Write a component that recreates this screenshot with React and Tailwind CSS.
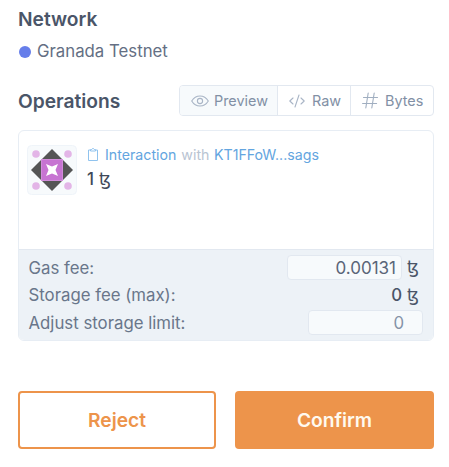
import React from "react";

function Tez({ className = "" }) {
  return (
    <span className={`inline-block w-[11px] whitespace-nowrap font-['DejaVu_Sans',sans-serif] ${className}`}>
      ꜩ
    </span>
  );
}

function EyeIcon() {
  return (
    <svg width="18" height="14" viewBox="0 0 18 14" fill="none" stroke="#a9b5c6" strokeWidth="1.1" className="shrink-0">
      <path d="M.7 7C2.700 3.700 5.500 2 9 2S15.300 3.700 17.300 7C15.300 10.300 12.500 12 9 12S2.700 10.300.7 7Z" />
      <circle cx="9" cy="7" r="2.600" />
    </svg>
  );
}

function CodeIcon() {
  return (
    <svg width="16" height="14" viewBox="0 0 16 14" fill="none" stroke="#a9b5c6" strokeWidth="1.1" strokeLinecap="round" strokeLinejoin="round" className="shrink-0">
      <path d="M4 4 .8 7 4 10M12 4l3.200 3L12 10M10 1 6 13" />
    </svg>
  );
}

function HashIcon() {
  return (
    <svg width="16" height="17" viewBox="0 0 16 17" fill="none" stroke="#a0aec0" strokeWidth="1.1" strokeLinecap="round" className="shrink-0">
      <path d="M6.200 1 3.800 16M12.200 1 9.800 16M1.500 5.500h14M.6 11.500h14" />
    </svg>
  );
}

function ClipboardIcon() {
  return (
    <svg width="10" height="14" viewBox="0 0 10 14" fill="none" stroke="#90c3ee" strokeWidth="1" className="shrink-0">
      <path d="M2.500 2h-2v10.500h9V2h-2" />
      <path d="M2.500 3v-1.500h1.300l.7-1h1l.7 1h1.300V3z" />
    </svg>
  );
}

function Identicon() {
  return (
    <svg width="50" height="50" viewBox="0 0 50 50" className="shrink-0">
      <rect x=".5" y=".5" width="49" height="49" rx="4" fill="#f7fafc" stroke="#eff4f9" />
      <g fill="#e3b5e7">
        <circle cx="9" cy="9" r="3.800" />
        <circle cx="41" cy="9" r="3.800" />
        <circle cx="9" cy="41" r="3.800" />
        <circle cx="41" cy="41" r="3.800" />
      </g>
      <path d="M25 4 46 25 25 46 4 25Z" fill="#555" />
      <rect x="14.500" y="14.500" width="21" height="21" fill="#c774d2" stroke="#d18bda" />
      <path d="m19 19 6 2.500 6-2.500-2.500 6 2.500 6-6-2.500-6 2.500 2.500-6Z" fill="#fff" />
    </svg>
  );
}

export default function App() {
  return (
    <main className="h-[467px] w-[449px] overflow-hidden bg-white pl-[18px] pr-[15px] pt-[7px] font-['Inter',sans-serif] text-[#4a5568]">
      <h2 className="h-6 text-[19.200px] font-semibold leading-[25px]">Network</h2>
      <div className="mt-2 flex h-6 items-center gap-[6px] pt-[2px] text-[16.800px]">
        <span className="-mt-px ml-px size-3 rounded-full bg-[#667eea]" />
        <span className="text-[#646f83]">Granada Testnet</span>
      </div>

      <div className="mt-[22px] flex h-[31px] items-center justify-between">
        <h2 className="text-[19.200px] font-semibold leading-6">Operations</h2>
        <div className="flex h-[31px] w-[255px] overflow-hidden rounded border border-[#e2e8f0] text-[14.400px] text-[#8290a5]">
          <div className="flex w-[98px] items-center gap-[5px] border-r border-[#e2e8f0] bg-[#f7fafc] pl-[11px]">
            <EyeIcon />
            <span>Preview</span>
          </div>
          <div className="flex w-[73px] items-center gap-[7px] border-r border-[#e2e8f0] pl-[11px]">
            <CodeIcon />
            <span>Raw</span>
          </div>
          <div className="flex flex-1 items-center gap-[7px] pl-[11px]">
            <HashIcon />
            <span>Bytes</span>
          </div>
        </div>
      </div>

      <section className="mt-[14px] h-[211px] overflow-hidden rounded-md border border-[#e7edf4]">
        <div className="flex h-[118px] gap-[10px] pl-[8px] pt-[14px]">
          <Identicon />
          <div>
            <div className="flex h-[20px] items-center pl-[1px] text-[14.200px] text-[#63a5e0]">
              <ClipboardIcon />
              <span className="ml-[7px]">Interaction</span>
              <span className="ml-[5px] text-[#b9c4d2]">with</span>
              <span className="ml-[4.500px]">KT1FFoW...sags</span>
            </div>
            <div className="flex h-7 items-center gap-[5px] pt-px text-[16.800px] font-medium text-[#3f4959]">
              <span>1</span>
              <Tez />
            </div>
          </div>
        </div>
        <div className="h-[91px] border-t border-[#e2e8f0] bg-[#edf2f7] pl-[9.500px] pr-[10px] pt-[4px] text-[16.800px] text-[#69768a]">
          <div className="flex h-[27px] items-center justify-between">
            <span className="pt-[2px]">Gas fee:</span>
            <div className="flex items-center gap-[5px] pr-[5px]">
              <span className="flex h-[25px] w-[115px] items-center justify-end rounded border border-[#e2e8f0] bg-[#f7fafc] pr-[5px] pt-[2px] text-[17px] text-[#5a6578]">0.00131</span>
              <Tez className="text-[#4a5568]" />
            </div>
          </div>
          <div className="flex h-7 items-center justify-between">
            <span className="pt-px">Storage fee (max):</span>
            <span className="flex gap-[5px] pr-[5px] pt-px font-medium text-[#4a5568]">
              <span>0</span>
              <Tez />
            </span>
          </div>
          <div className="flex h-[27px] items-center justify-between">
            <span className="pt-[2px]">Adjust storage limit:</span>
            <span className="flex h-[25px] w-[115px] items-center justify-end rounded border border-[#e2e8f0] bg-[#f7fafc] pr-[18px] pt-[2px] text-[#8592a7]">0</span>
          </div>
        </div>
      </section>

      <div className="mt-[50px] flex h-[58px] gap-[19px] text-[19.200px] font-semibold">
        <button className="w-[198px] rounded border-2 border-[#ed944b] text-[#ed944b]">Reject</button>
        <button className="flex-1 rounded bg-[#ed944b] text-[#fffaf0]">Confirm</button>
      </div>
    </main>
  );
}
